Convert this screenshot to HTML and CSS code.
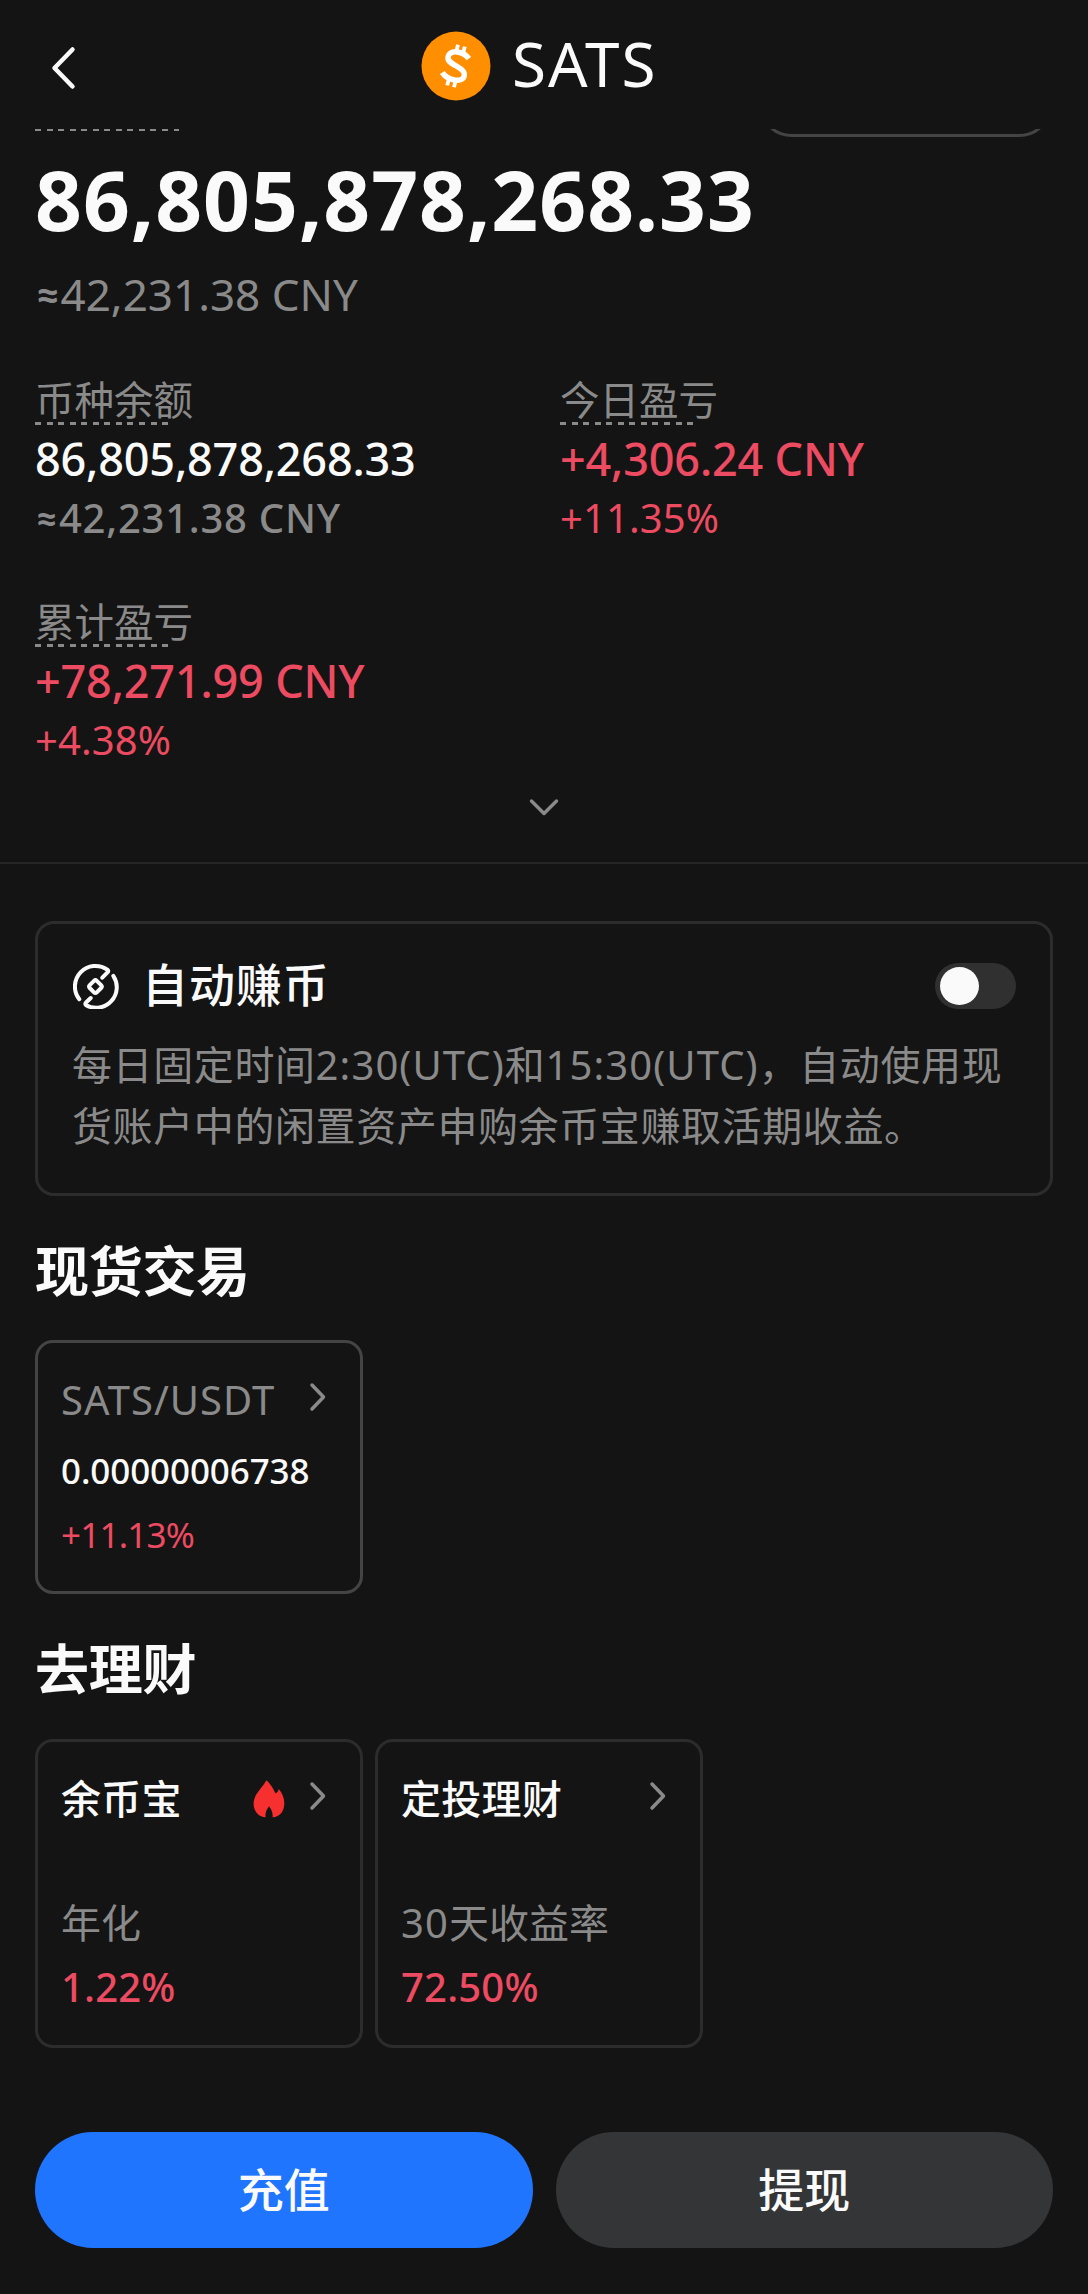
FILE: index.html
```html
<!DOCTYPE html>
<html lang="zh-CN">
<head>
<meta charset="utf-8">
<title>SATS</title>
<link rel="stylesheet" href="styles.css">
</head>
<body>
<header class="topbar">
  <svg class="back" width="40" height="50" viewBox="0 0 40 50"><path d="M28.500 6.500 10.500 25 28.500 43.500"/></svg>
  <svg class="coin" width="70" height="70" viewBox="0 0 70 70">
    <circle cx="35" cy="35" r="34.500"/>
    <g transform="rotate(15 35 35)">
      <path class="coin-s" d="M45.500 24.500C42 21.500 38 20.800 34 21C28.500 21.300 25 24 25 28C25 32 28.500 33.300 35 34.800C42 36.400 45.500 38.300 45.500 42.200C45.500 46.300 41.500 49 35.500 49C30.500 49 26.500 47.700 23.500 44.800"/>
      <path class="coin-bar" d="M31.500 14v6.500M38.500 14v6.500M31.500 49.500v6.500M38.500 49.500v6.500"/>
    </g>
  </svg>
  <h1 class="title">SATS</h1>
</header>

<main>
  <section class="summary">
    <div class="clipped">
      <span class="dash dash-long"></span>
      <span class="pill"></span>
    </div>
    <div class="total">86,805,878,268.33</div>
    <div class="total-fiat"><span class="approx">≈</span>42,231.38 CNY</div>
    <div class="stats">
      <div class="stat">
        <div class="label">币种余额</div>
        <div class="value">86,805,878,268.33</div>
        <div class="sub"><span class="approx">≈</span>42,231.38 CNY</div>
      </div>
      <div class="stat">
        <div class="label">今日盈亏</div>
        <div class="value up">+4,306.24 CNY</div>
        <div class="sub pct up">+11.35%</div>
      </div>
      <div class="stat">
        <div class="label">累计盈亏</div>
        <div class="value up">+78,271.99 CNY</div>
        <div class="sub pct up">+4.38%</div>
      </div>
    </div>
    <svg class="expand" width="32" height="20" viewBox="0 0 32 20"><path d="M3.500 4 16 16.500 28.500 4"/></svg>
  </section>

  <section class="auto-earn">
    <div class="auto-head">
      <svg class="auto-icon" width="46" height="46" viewBox="0 0 46 46">
        <path d="M6.300 36.200A20.600 20.600 0 0 1 34.300 6.600Q35.800 7.900 34.700 9.200L29.300 14.700"/>
        <path d="M40.300 12.800A20.600 20.600 0 0 1 13.100 42.200Q11.700 41 12.800 39.800L17.700 35"/>
        <path d="M21 17.900Q22.400 16.500 23.800 17.900L28.100 22.200Q29.500 23.600 28.100 25L23.800 29.300Q22.400 30.700 21 29.300L16.700 25Q15.300 23.600 16.700 22.200Z"/>
      </svg>
      <h3 class="auto-title">自动赚币</h3>
      <span class="switch"><span class="knob"></span></span>
    </div>
    <p class="auto-text">每日固定时间<span class="latin">2:30(UTC)</span>和<span class="latin">15:30(UTC)</span>，自动使用现<br>货账户中的闲置资产申购余币宝赚取活期收益。</p>
  </section>

  <h2 class="heading">现货交易</h2>
  <div class="cards">
    <div class="card spot">
      <div class="card-head">
        <span class="pair">SATS/USDT</span>
        <svg class="chev" width="20" height="32" viewBox="0 0 20 32"><path d="M4 4 15.500 16 4 28"/></svg>
      </div>
      <div class="price">0.00000006738</div>
      <div class="change up">+11.13%</div>
    </div>
  </div>

  <h2 class="heading heading-earn">去理财</h2>
  <div class="cards cards-earn">
    <div class="card earn">
      <div class="card-head">
        <span class="name">余币宝</span>
        <svg class="flame" width="32" height="38" viewBox="0 0 32 38"><path d="M13.200.6C14.200.3 19.500 6.500 22.500 13.500C24.300 12.800 25.200 11 25.800 9C29.500 13.500 31.500 18.500 31.300 24C31.100 31 27 37 19.600 37.300C20 33 18.700 29.500 16 26.200C13.500 29.500 12 33 12.600 37.300C5 37 .5 30.500.6 23.500C.8 14.500 8.500 9 13.200.6Z"/></svg>
        <svg class="chev" width="20" height="32" viewBox="0 0 20 32"><path d="M4 4 15.500 16 4 28"/></svg>
      </div>
      <div class="caption">年化</div>
      <div class="rate up">1.22%</div>
    </div>
    <div class="card earn">
      <div class="card-head">
        <span class="name">定投理财</span>
        <svg class="chev" width="20" height="32" viewBox="0 0 20 32"><path d="M4 4 15.500 16 4 28"/></svg>
      </div>
      <div class="caption"><span class="latin">30</span>天收益率</div>
      <div class="rate up">72.50%</div>
    </div>
  </div>
</main>

<footer class="actions">
  <button class="btn primary">充值</button>
  <button class="btn">提现</button>
</footer>
</body>
</html>
```
FILE: styles.css
```css
* { box-sizing: border-box; margin: 0; padding: 0; }

body {
  width: 1088px;
  height: 2294px;
  background: #141414;
  color: #fafafa;
  font-family: "Noto Sans", "Noto Sans CJK SC", sans-serif;
  white-space: nowrap;
  overflow: hidden;
}

svg { display: block; fill: none; flex: none; }

.up { color: #ed4b61; }
.approx { font-family: Lato, sans-serif; font-weight: 700; line-height: 1; }

/* top bar */
.topbar {
  display: grid;
  grid-template-columns: 377px 70px 1fr;
  align-items: center;
  height: 129px;
  padding: 3px 0 0 44px;
}
.back { stroke: #fafafa; stroke-width: 4.500; stroke-linecap: round; stroke-linejoin: round; margin-top: 4px; }
.coin { margin-top: -1px; }
.coin circle { fill: #ff8e00; }
.coin-s { stroke: #fff; stroke-width: 5.500; }
.coin-bar { stroke: #fff; stroke-width: 3.800; }
.title { font-size: 62px; font-weight: 400; line-height: 80px; margin: -7px 0 0 21px; letter-spacing: 1.900px; }

/* balance summary */
.summary { height: 735px; border-bottom: 2px solid #262626; }
.clipped {
  display: flex;
  justify-content: space-between;
  align-items: flex-start;
  height: 9px;
  margin: 0 35px;
  overflow: hidden;
}
.dash-long {
  width: 144px;
  height: 2px;
  background: repeating-linear-gradient(90deg, #8a8a8a 0 6px, transparent 6px 11.550px);
}
.pill { width: 295px; height: 72px; margin-top: -64px; border: 3px solid #444; border-radius: 34px; }
.total { margin: 13px 0 0 35px; font-size: 82px; font-weight: 700; line-height: 96px; letter-spacing: 1px; }
.total-fiat { margin: 20px 0 0 35px; font-size: 44px; line-height: 54px; color: #8a8a8a; }
.stats {
  display: grid;
  grid-template-columns: 525px 1fr;
  row-gap: 51px;
  margin: 55px 0 0 35px;
}
.label {
  width: max-content;
  height: 49px;
  font-size: 39.500px;
  line-height: 48px;
  color: #8a8a8a;
  background: repeating-linear-gradient(90deg, #8a8a8a 0 6px, transparent 6px 11.550px) 0 46px / 133px 3px no-repeat;
}
.value { height: 63px; padding-top: 4px; font-size: 45px; font-weight: 500; line-height: 60px; letter-spacing: -0.180px; }
.sub { height: 59px; padding-top: 1px; font-size: 40px; font-weight: 500; line-height: 58px; letter-spacing: 0.750px; }
.sub:not(.up) { color: #8a8a8a; }
.pct { font-weight: 400; letter-spacing: 0.100px; }
.expand { margin: 28px auto 0; stroke: #8a8a8a; stroke-width: 3.500; stroke-linecap: round; stroke-linejoin: round; }

/* auto earn */
.auto-earn {
  height: 275px;
  margin: 57px 35px 0;
  padding: 40px 34px 0;
  border: 3px solid #2c2c2c;
  border-radius: 19px;
}
.auto-head { display: flex; align-items: center; height: 46px; }
.auto-icon { margin: -2px 0 0 1px; stroke: #fafafa; stroke-width: 4; stroke-linecap: round; stroke-linejoin: round; }
.auto-title { margin: -7px 0 0 23px; font-size: 46px; font-weight: 500; line-height: 46px; letter-spacing: 0.900px; }
.switch {
  display: flex;
  align-items: center;
  width: 81px;
  height: 46px;
  margin: -2px 0 0 auto;
  padding-left: 5px;
  border-radius: 23px;
  background: #303030;
}
.knob { width: 39px; height: 38px; border-radius: 50%; background: #fafafa; }
.auto-text { margin-top: 24px; font-size: 40px; line-height: 61px; letter-spacing: 0.600px; color: #8a8a8a; }
.latin { letter-spacing: 1.100px; }

/* product cards */
.heading { margin: 41px 0 0 35px; font-size: 54px; font-weight: 700; line-height: 68px; letter-spacing: -0.300px; }
.heading-earn { margin-top: 41px; }
.cards { display: flex; gap: 12px; margin: 35px 0 0 35px; }
.cards-earn { margin-top: 36px; }
.card { width: 328px; padding: 0 23px; border: 3px solid #2c2c2c; border-radius: 18px; }
.card-head { display: flex; align-items: center; height: 48px; font-size: 40px; line-height: 48px; }
.chev { stroke: #8a8a8a; stroke-width: 3.500; stroke-linecap: round; stroke-linejoin: round; margin: -6px 9px 0 auto; }
.spot { height: 254px; padding-top: 33px; border-color: #444; }
.pair { color: #8a8a8a; letter-spacing: 1px; }
.price { margin-top: 22px; font-size: 35px; font-weight: 500; line-height: 50px; letter-spacing: -0.100px; }
.change { margin-top: 14px; font-size: 35px; line-height: 50px; letter-spacing: -0.800px; }
.earn { height: 309px; padding-top: 33px; }
.name { font-weight: 500; letter-spacing: 0.300px; }
.flame { fill: #f6302e; margin-left: auto; }
.flame + .chev { margin-left: 23px; }
.caption { margin-top: 76px; font-size: 40px; line-height: 48px; color: #8a8a8a; }
.rate { margin-top: 14px; font-size: 40px; font-weight: 500; line-height: 52px; letter-spacing: 0.200px; }

/* bottom actions */
.actions { display: grid; grid-template-columns: 1fr 1fr; gap: 23px; margin: 84px 35px 0; }
.btn {
  height: 116px;
  padding-bottom: 2px;
  border: 0;
  border-radius: 58px;
  background: #333537;
  color: #fafafa;
  font: 500 46px/114px "Noto Sans", "Noto Sans CJK SC", sans-serif;
}
.primary { background: #2075ff; }
```
